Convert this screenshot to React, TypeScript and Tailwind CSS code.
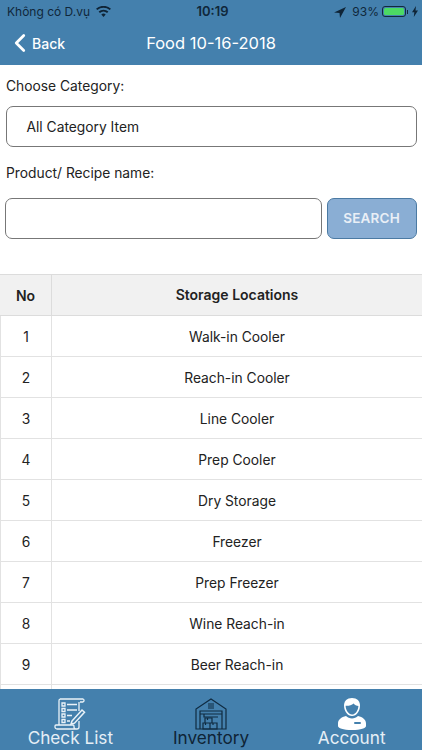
import { ChevronLeft } from 'lucide-react'

const LOCATIONS = [
  'Walk-in Cooler',
  'Reach-in Cooler',
  'Line Cooler',
  'Prep Cooler',
  'Dry Storage',
  'Freezer',
  'Prep Freezer',
  'Wine Reach-in',
  'Beer Reach-in',
  '',
]

const font = { fontFamily: 'Inter, "Liberation Sans", sans-serif' }

const CheckListIcon = () => (
  <svg width="32" height="32" viewBox="0 0 32 32" fill="none" stroke="#eaf2f8" strokeWidth="1.3">
    <path d="M6 1h23a1.6 1.6 0 0 1 0 3h-3" />
    <path d="M6 1a2 2 0 0 0-1 2v24" />
    <path d="M25 4v9M25 23v6a2 2 0 0 1-2 2H3a2 2 0 0 1-2-2v-1a1 1 0 0 1 1-1h17a1 1 0 0 1 1 1v1a2 2 0 0 0 2 2" />
    <path d="M8 5h3v3H8zM8 10.500h3v3H8zM8 16h3v3H8zM8 21.500h3v3H8z" />
    <path d="M13 6.500h10M13 12h10M13 17.500h5M13 23h3" />
    <path d="M18 23l10-11 2.500 2.200-10 11-3.500 1z" fill="#4480ad" strokeWidth="1.5" />
  </svg>
)

const InventoryIcon = () => (
  <svg width="32" height="32" viewBox="0 0 32 32" fill="none" stroke="#0f2a40" strokeWidth="1.2">
    <path d="M1 31V11L16 1l15 10v20z" />
    <path d="M13 6h6M13 8h6M13 10h6" />
    <path d="M5 31V13h22v18" />
    <path d="M5 16h22M9 16v3h14" />
    <path d="M10 20h7v5h-7zM8 25h7v6H8zM15 25h7v6h-7z" />
    <path d="M12.500 20v2M10.500 25v2M18 25v2" />
  </svg>
)

const AccountIcon = () => (
  <svg width="28" height="32" viewBox="0 0 28 32">
    <path
      fill="#ffffff"
      d="M14 0c5 0 8 3 8 7.500 0 5.500-3.500 10.500-8 10.500S6 13 6 7.500C6 3 9 0 14 0z"
    />
    <path
      fill="#4480ad"
      d="M7.600 7.800c2.500.3 6-.3 8-2.300 1 1.500 3 2.300 4.800 2.400-.2 4.300-2.900 8.600-6.400 8.600S7.800 12.200 7.600 7.800z"
    />
    <path
      fill="#ffffff"
      d="M8 18c1.600 1.600 3.700 2.400 6 2.400s4.400-.8 6-2.400c4.600 1.200 8 3.500 8 7.500v2.500c0 2-5 4-14 4S0 30 0 28v-2.500C0 21.500 3.400 19.200 8 18z"
    />
    <rect x="16" y="24" width="7" height="2" rx="1" fill="#4480ad" />
  </svg>
)

const TabItem = ({
  label,
  icon,
  color,
}: {
  label: string
  icon: React.ReactNode
  color: string
}) => (
  <div className="flex flex-1 flex-col items-center pt-[9px]">
    <div className="flex h-[31px] items-center justify-center">{icon}</div>
    <span className={`mt-[-2px] text-[17.200px] leading-[22px] ${color}`}>{label}</span>
  </div>
)

export default function App() {
  return (
    <div className="flex h-[750px] w-[422px] flex-col overflow-hidden bg-white" style={font}>
      <div className="h-[65px] shrink-0 bg-[#4480ad]">
        <div className="flex h-[22px] items-center justify-between pl-[7px] pr-[4px] pt-[1px] text-[12px] text-[#10273a]">
          <div className="flex w-[130px] items-center gap-[6px]">
            <span>Không có D.vụ</span>
            <svg width="15" height="11" viewBox="0 0 15 11" fill="#0f2436">
              <path d="M7.500 11 5.300 8.500a3.200 3.200 0 0 1 4.400 0z" />
              <path d="M3.900 7 2.600 5.500a7.400 7.400 0 0 1 9.800 0L11.100 7a5.400 5.400 0 0 0-7.200 0z" />
              <path d="M1.300 4.100 0 2.700a11.300 11.300 0 0 1 15 0l-1.300 1.400a9.300 9.300 0 0 0-12.400 0z" />
            </svg>
          </div>
          <span className="text-[13px] font-semibold">10:19</span>
          <div className="flex w-[130px] items-center justify-end gap-[1px]">
            <svg width="12" height="12" viewBox="0 0 12 12" fill="#0f2436" className="mr-[5px]">
              <path d="M12 1 0 6.500l5.500.5.500 5z" />
            </svg>
            <span>93%</span>
            <div className="ml-[2px] flex h-[11px] w-[24px] items-center rounded-[3px] border border-[#12293c] p-[1px]">
              <div className="h-full w-full rounded-[1.500px] bg-[#4cd964]" />
            </div>
            <div className="h-[4px] w-[1px] bg-[#12293c]" />
            <svg width="6" height="11" viewBox="0 0 6 11" fill="#0f2436" className="ml-[3px]">
              <path d="M4 0 0 6.200h2.300L1.800 11 6 4.600H3.500z" />
            </svg>
          </div>
        </div>
        <div className="relative flex h-[43px] items-center justify-center">
          <div className="absolute left-[9px] top-[6px] flex items-center text-white">
            <ChevronLeft size={30} strokeWidth={2.2} className="ml-[-4px]" />
            <span className="ml-[-3px] pt-[1px] text-[14px] font-medium">Back</span>
          </div>
          <span className="text-[16.500px] font-normal text-white">Food 10-16-2018</span>
        </div>
      </div>

      <div className="flex min-h-0 flex-1 flex-col pt-[11px]">
        <div className="px-[6px] text-[13.800px] leading-[20px] text-[#222]">Choose Category:</div>
        <div className="mx-[5.500px] mt-[10px] flex h-[41px] items-center rounded-[7px] border border-[#777] pl-[20px] pt-[1px] text-[13.800px] text-[#222]">
          All Category Item
        </div>
        <div className="mt-[16px] px-[6px] text-[13.800px] leading-[20px] text-[#222]">
          Product/ Recipe name:
        </div>
        <div className="mt-[15px] flex gap-[5px] pl-[5px] pr-[5.500px]">
          <div className="h-[41px] w-[317px] rounded-[7px] border border-[#777] bg-white" />
          <div className="flex h-[41px] w-[90px] items-center justify-center rounded-[7px] border border-[#4b7aa3] bg-[#8aaed4] text-[13.500px] font-semibold tracking-[0.2px] text-[#e9eff6]">
            SEARCH
          </div>
        </div>

        <div className="mt-[35px] min-h-0 flex-1 overflow-hidden">
          <div className="flex h-[42px] border-y border-[#dcdcdc] bg-[#f1f1f1] pb-[1px] text-[14px] font-semibold text-[#222]">
            <div className="mb-[-1px] flex w-[52px] items-center justify-center border-r border-[#dcdcdc]">No</div>
            <div className="flex flex-1 items-center justify-center">Storage Locations</div>
          </div>
          {LOCATIONS.map((name, i) => (
            <div key={i} className="flex h-[41px] border-b border-[#e2e2e2] text-[13.800px] text-[#222]">
              <div className="flex w-[52px] items-center justify-center border-x border-[#e2e2e2] pt-[2px]">
                {name ? i + 1 : ''}
              </div>
              <div className="flex flex-1 items-center justify-center pt-[2px]">{name}</div>
            </div>
          ))}
        </div>
      </div>

      <div className="flex h-[61px] shrink-0 overflow-hidden bg-[#4480ad]">
        <TabItem label="Check List" icon={<CheckListIcon />} color="text-[#e6eff6]" />
        <TabItem label="Inventory" icon={<InventoryIcon />} color="text-[#0f2436]" />
        <TabItem label="Account" icon={<AccountIcon />} color="text-[#e6eff6]" />
      </div>
    </div>
  )
}
